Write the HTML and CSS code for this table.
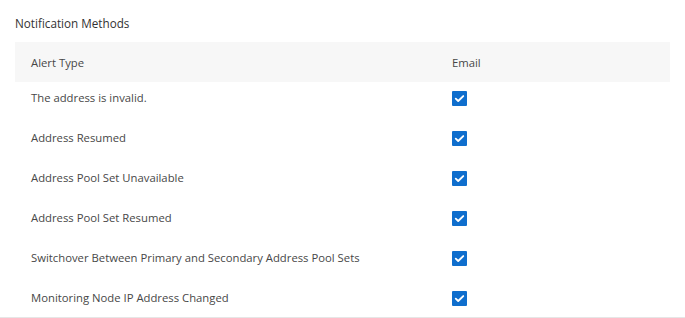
FILE: index.html
```html
<!DOCTYPE html>
<html lang="en">
<head>
<meta charset="utf-8">
<title>Notification Methods</title>
<link rel="stylesheet" href="styles.css">
</head>
<body>
<section class="panel">
  <h2 class="panel-title">Notification Methods</h2>
  <div class="grid">
    <div class="grid-head">
      <span class="col-type">Alert Type</span>
      <span class="col-email">Email</span>
    </div>
    <div class="grid-body">
      <div class="grid-row"><span class="col-type">The address is invalid.</span><span class="col-email"><span class="check"><svg viewBox="0 0 16 16"><path d="M4 8.2l2.6 2.5L12 5.4"/></svg></span></span></div>
      <div class="grid-row"><span class="col-type">Address Resumed</span><span class="col-email"><span class="check"><svg viewBox="0 0 16 16"><path d="M4 8.2l2.6 2.5L12 5.4"/></svg></span></span></div>
      <div class="grid-row"><span class="col-type">Address Pool Set Unavailable</span><span class="col-email"><span class="check"><svg viewBox="0 0 16 16"><path d="M4 8.2l2.6 2.5L12 5.4"/></svg></span></span></div>
      <div class="grid-row"><span class="col-type">Address Pool Set Resumed</span><span class="col-email"><span class="check"><svg viewBox="0 0 16 16"><path d="M4 8.2l2.6 2.5L12 5.4"/></svg></span></span></div>
      <div class="grid-row"><span class="col-type">Switchover Between Primary and Secondary Address Pool Sets</span><span class="col-email"><span class="check"><svg viewBox="0 0 16 16"><path d="M4 8.2l2.6 2.5L12 5.4"/></svg></span></span></div>
      <div class="grid-row"><span class="col-type">Monitoring Node IP Address Changed</span><span class="col-email"><span class="check"><svg viewBox="0 0 16 16"><path d="M4 8.2l2.6 2.5L12 5.4"/></svg></span></span></div>
    </div>
  </div>
</section>
</body>
</html>
```

FILE: styles.css
```css
html, body {
  margin: 0;
  padding: 0;
  background: #ffffff;
}

body {
  font-family: "Open Sans", "Noto Sans", sans-serif;
  font-size: 11.3px;
  color: #474747;
  overflow: hidden;
}

.panel {
  padding: 15px 0 0;
  border-bottom: 1px solid #e6e6e6;
}

.panel-title {
  margin: 0 0 11px 15px;
  font-size: 11.7px;
  font-weight: normal;
  line-height: 16px;
  color: #333333;
}

.grid {
  margin: 0 15px;
}

.grid-head {
  display: flex;
  align-items: center;
  height: 40px;
  background: #f7f7f7;
  padding-left: 16px;
}

.grid-row {
  display: flex;
  align-items: center;
  height: 16px;
  padding: 8px 0 16px 16px;
  line-height: 16px;
}

.grid-row:last-child {
  padding-bottom: 11px;
}

.col-type {
  width: 421px;
  flex: none;
}

.col-email {
  display: flex;
  align-items: center;
}

.check {
  display: inline-flex;
  width: 15px;
  height: 15px;
  background: #0f6ecd;
  border-radius: 1px;
}

.check svg {
  width: 15px;
  height: 15px;
  fill: none;
  stroke: #ffffff;
  stroke-width: 2;
  stroke-linecap: round;
  stroke-linejoin: round;
}
```
